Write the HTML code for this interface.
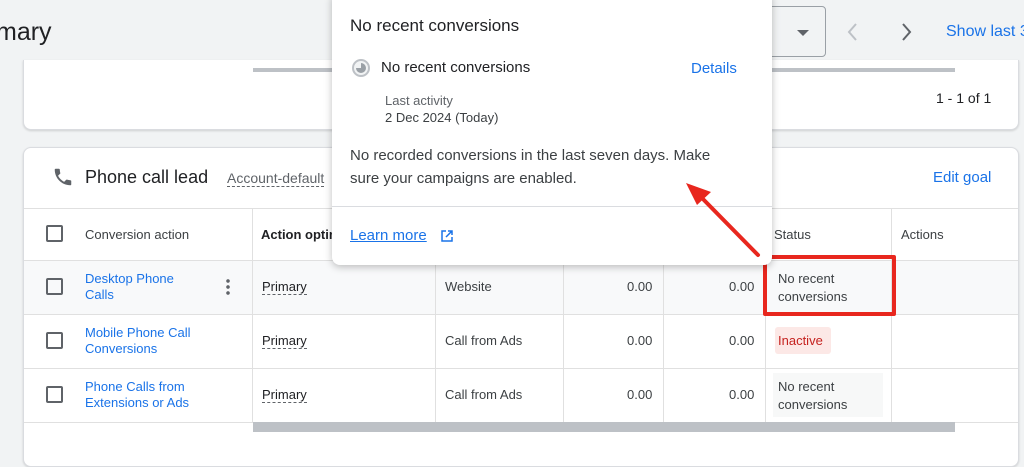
<!DOCTYPE html>
<html><head><style>
*{box-sizing:border-box;margin:0;padding:0}
body{width:1024px;height:452px;overflow:hidden;background:#f1f3f4;font-family:"Liberation Sans",Arial,sans-serif;position:relative;color:#202124}
.a{position:absolute}
.card{background:#fff;border:1px solid #dadce0;border-radius:8px;box-shadow:0 1px 2px rgba(0,0,0,.15)}
.t{font-size:13px;color:#3c4043}
.link{color:#1a73e8}
.dash{border-bottom:1px dashed #5f6368}
.vl{position:absolute;width:1px;background:#e0e0e0}
.hl{position:absolute;height:1px;background:#e0e0e0;left:24px;width:994px}
.cb{position:absolute;width:17px;height:17px;border:2px solid #5f6368;border-radius:2px;left:46px}
</style></head><body>
<div class="a" style="left:-4px;top:18px;font-size:25px;color:#202124">mary</div>
<div class="a" style="left:740px;top:6px;width:86px;height:51px;border:1px solid #9aa0a6;border-radius:4px;background:#f1f3f4"></div>
<div class="a" style="left:797px;top:30px;border-left:6px solid transparent;border-right:6px solid transparent;border-top:6px solid #5f6368"></div>
<svg class="a" style="left:845px;top:22px" width="16" height="20"><path d="M11 2 L4 10 L11 18" fill="none" stroke="#bdc1c6" stroke-width="2"/></svg>
<svg class="a" style="left:898px;top:22px" width="16" height="20"><path d="M5 2 L12 10 L5 18" fill="none" stroke="#5f6368" stroke-width="2"/></svg>
<div class="a link" style="left:946px;top:23px;font-size:16px;white-space:nowrap">Show last 3</div>

<div class="a card" style="left:23px;top:60px;width:996px;height:70px;border-top:none;border-radius:0 0 8px 8px"></div>
<div class="a" style="left:253px;top:68px;width:702px;height:4px;background:#bdc1c6"></div>
<div class="a t" style="left:936px;top:90px;font-size:14px;color:#202124">1 - 1 of 1</div>

<div class="a card" style="left:23px;top:147px;width:996px;height:320px"></div>
<svg class="a" style="left:52px;top:166px" width="22" height="22" viewBox="0 0 24 24"><path fill="#5f6368" d="M20 15.5c-1.2 0-2.4-.2-3.6-.6-.3-.1-.7 0-1 .2l-2.2 2.2c-2.8-1.4-5.1-3.8-6.6-6.6l2.2-2.2c.3-.3.4-.7.2-1-.3-1.1-.5-2.3-.5-3.5 0-.6-.4-1-1-1H4c-.6 0-1 .4-1 1 0 9.4 7.6 17 17 17 .6 0 1-.4 1-1v-3.5c0-.6-.4-1-1-1z"/></svg>
<div class="a" style="left:85px;top:167px;font-size:18px">Phone call lead</div>
<div class="a dash" style="left:227px;top:170px;font-size:14px;color:#5f6368">Account-default</div>
<div class="a link" style="left:933px;top:169px;font-size:15px">Edit goal</div>

<div class="hl" style="top:208px"></div>
<div class="hl" style="top:260px"></div>
<div class="hl" style="top:314px"></div>
<div class="hl" style="top:368px"></div>
<div class="hl" style="top:422px"></div>
<div class="a" style="left:24px;top:261px;width:994px;height:53px;background:#f8f9fa"></div>
<div class="vl" style="left:252px;top:208px;height:214px"></div>
<div class="vl" style="left:435px;top:208px;height:214px"></div>
<div class="vl" style="left:563px;top:208px;height:214px"></div>
<div class="vl" style="left:663px;top:208px;height:214px"></div>
<div class="vl" style="left:765px;top:208px;height:214px"></div>
<div class="vl" style="left:891px;top:208px;height:214px"></div>
<div class="a" style="left:253px;top:422px;width:702px;height:10px;background:#bdc1c6"></div>

<div class="cb" style="top:225px"></div>
<div class="a t" style="left:85px;top:227px;font-weight:500">Conversion action</div>
<div class="a t" style="left:261px;top:227px;font-weight:bold;color:#202124">Action optin</div>
<div class="a t" style="left:774px;top:227px">Status</div>
<div class="a t" style="left:901px;top:227px">Actions</div>

<div class="cb" style="top:278px"></div>
<div class="a link" style="left:85px;top:271px;font-size:13px;line-height:16px">Desktop Phone<br>Calls</div>
<div class="a" style="left:226px;top:278px;width:4px;height:18px;background:radial-gradient(circle,#5f6368 1.6px,transparent 2px) 0 0/4px 6px"></div>
<div class="a t dash" style="left:262px;top:279px;color:#202124">Primary</div>
<div class="a t" style="left:445px;top:279px">Website</div>
<div class="a t" style="left:627px;top:279px">0.00</div>
<div class="a t" style="left:729px;top:279px">0.00</div>
<div class="a t" style="left:778px;top:270px;line-height:18px">No recent<br>conversions</div>

<div class="cb" style="top:332px"></div>
<div class="a link" style="left:85px;top:325px;font-size:13px;line-height:16px">Mobile Phone Call<br>Conversions</div>
<div class="a t dash" style="left:262px;top:333px;color:#202124">Primary</div>
<div class="a t" style="left:445px;top:333px">Call from Ads</div>
<div class="a t" style="left:627px;top:333px">0.00</div>
<div class="a t" style="left:729px;top:333px">0.00</div>
<div class="a" style="left:775px;top:327px;width:56px;height:27px;background:#fce8e6;border-radius:3px;color:#c5221f;font-size:13px;padding:6px 3px">Inactive</div>

<div class="cb" style="top:386px"></div>
<div class="a link" style="left:85px;top:379px;font-size:13px;line-height:16px">Phone Calls from<br>Extensions or Ads</div>
<div class="a t dash" style="left:262px;top:387px;color:#202124">Primary</div>
<div class="a t" style="left:445px;top:387px">Call from Ads</div>
<div class="a t" style="left:627px;top:387px">0.00</div>
<div class="a t" style="left:729px;top:387px">0.00</div>
<div class="a" style="left:773px;top:373px;width:110px;height:44px;background:#f1f3f4;opacity:.6"></div>
<div class="a t" style="left:778px;top:378px;line-height:18px">No recent<br>conversions</div>

<div class="a" style="left:763px;top:255px;width:133px;height:61px;border:4px solid #e8271e;border-radius:2px"></div>

<div class="a" style="left:332px;top:-8px;width:440px;height:273px;background:#fff;border-radius:8px;box-shadow:0 2px 8px rgba(0,0,0,.25)"></div>
<div class="a" style="left:350px;top:16px;font-size:17px">No recent conversions</div>
<svg class="a" style="left:351px;top:58px" width="20" height="20"><circle cx="10" cy="10" r="8" fill="#f1f3f4" stroke="#bdc1c6" stroke-width="2"/><path d="M10 5 A5 5 0 1 1 5 10 L10 10Z" fill="#9aa0a6"/></svg>
<div class="a" style="left:381px;top:59px;font-size:15px">No recent conversions</div>
<div class="a link" style="left:691px;top:60px;font-size:15px">Details</div>
<div class="a" style="left:385px;top:93px;font-size:13px;color:#5f6368">Last activity</div>
<div class="a" style="left:385px;top:110px;font-size:13px;color:#3c4043">2 Dec 2024 (Today)</div>
<div class="a" style="left:350px;top:144px;font-size:15px;color:#3c4043;line-height:23px;width:385px">No recorded conversions in the last seven days. Make sure your campaigns are enabled.</div>
<div class="a" style="left:332px;top:206px;width:440px;height:1px;background:#dadce0"></div>
<div class="a link" style="left:350px;top:227px;font-size:15px;text-decoration:underline">Learn more</div>
<svg class="a" style="left:440px;top:229px" width="14" height="14" viewBox="0 0 14 14"><path d="M6 2H2v10h10V8M8 2h4v4M12 2L6 8" fill="none" stroke="#1a73e8" stroke-width="1.5"/></svg>

<svg class="a" style="left:0;top:0" width="1024" height="452"><path d="M758 255 L700 196" stroke="#e8271e" stroke-width="4" stroke-linecap="round"/><path d="M686 183 L711 192 L697 205Z" fill="#e8271e"/></svg>
</body></html>
